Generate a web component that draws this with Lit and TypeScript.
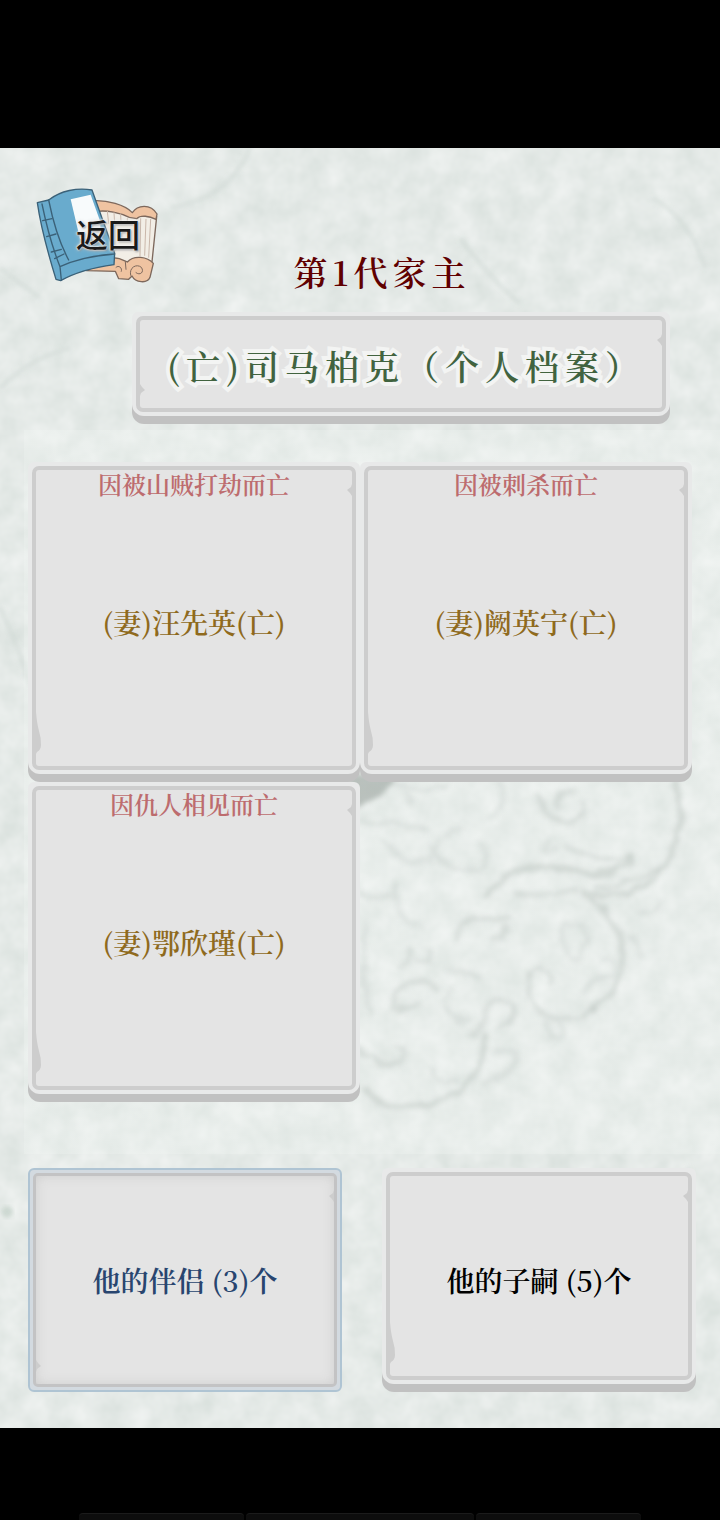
import { LitElement, html, css, svg } from "lit";
import { customElement, property } from "lit/decorators.js";

@customElement("stone-button")
class StoneButton extends LitElement {
  @property({ type: Boolean, reflect: true }) pressed = false;
  @property() note = "";
  @property() label = "";
  @property() tone = "ink";

  static styles = css`
    :host {
      display: block;
    }
    .stone {
      display: flex;
      width: 100%;
      height: 100%;
      margin: 0;
      padding: 0 0 8px;
      border: 0;
      border-radius: 4px 4px 12px 12px;
      background: linear-gradient(transparent 50%, #c1c1c1 50%);
      font: inherit;
      color: inherit;
      cursor: pointer;
    }
    .rim {
      flex: 1;
      display: flex;
      padding: 4px;
      border-radius: 6px 6px 12px 12px;
      background: #e8e9e9;
    }
    .face {
      position: relative;
      flex: 1;
      display: grid;
      place-items: center;
      border: 4px solid #cdcdcd;
      border-radius: 7px;
      background: #e4e4e4;
    }
    .label {
      grid-area: 1 / 1;
      padding-top: 8px;
      font-size: 28px;
      line-height: 36px;
      white-space: pre;
    }
    .note {
      grid-area: 1 / 1;
      align-self: start;
      font-size: 24px;
      line-height: 28px;
      color: #bd6c6e;
    }
    .chip {
      position: absolute;
      fill: #cdcdcd;
    }
    .chip-right {
      top: 14px;
      right: 0;
      width: 5px;
      height: 12px;
    }
    .chip-left {
      bottom: 12px;
      left: 0;
      width: 6px;
      height: 42px;
    }
    .ink {
      color: #000;
    }
    .gold {
      color: #8f6a1d;
    }
    .green {
      padding: 4px 0 0 10px;
      font-size: 34px;
      letter-spacing: 6px;
      color: #41633f;
      -webkit-text-stroke: 8px #f3f4f3;
      stroke-linejoin: round;
      paint-order: stroke fill;
    }
    .navy {
      color: #28456f;
    }
    :host([pressed]) .stone {
      padding: 0;
      border-radius: 6px;
      background: none;
    }
    :host([pressed]) .rim {
      padding: 3px;
      border: 2px solid #afc4d3;
      border-radius: 6px;
      background: #d3dae0;
    }
    :host([pressed]) .face {
      border-width: 3px;
      border-color: #c3c3c4;
      border-radius: 5px;
      box-shadow: inset 0 0 12px #cfcfcf;
    }
    :host([pressed]) .label {
      padding-top: 0;
    }
    :host([pressed]) .chip-left,
    :host([flat]) .chip-left {
      width: 5px;
      height: 12px;
    }
  `;

  render() {
    const small = this.pressed || this.hasAttribute("flat");
    return html`<button class="stone" aria-pressed=${this.pressed ? "true" : "false"}>
      <span class="rim"><span class="face">
        <svg class="chip chip-right" viewBox="0 0 5 12" aria-hidden="true"><path d="M5 0 L4 3 L0 6 L3 9 L5 12Z" /></svg>
        ${small
          ? html`<svg class="chip chip-left" viewBox="0 0 5 12" aria-hidden="true"><path d="M0 0 L2 3 L5 6 L1 9 L0 12Z" /></svg>`
          : html`<svg class="chip chip-left" viewBox="0 0 6 42" aria-hidden="true"><path d="M0 0 Q1 12 3 19 Q5 25 5 33 Q5 38 1 40 L0 42Z" /></svg>`}
        ${this.note ? html`<span class="note">${this.note}</span>` : ""}
        <span class="label ${this.tone}">${this.label}</span>
      </span></span>
    </button>`;
  }
}

const bookIcon = svg`
  <g stroke-linejoin="round" stroke-linecap="round" stroke="#7d685c" stroke-width="4">
    <path fill="#f2eee6" d="M225 112 L338 138 L410 140 L395 285 L320 275 L240 275Z" />
    <path fill="#efc3a1" d="M222 92 C260 90 315 104 337 128 C352 104 392 100 411 132 L408 148 C388 138 362 134 350 146 L328 142 C300 128 260 120 232 124Z" />
    <path fill="#efc3a1" d="M200 302 L286 264 C300 264 308 270 322 276 C342 254 382 260 400 280 L390 322 C382 342 346 338 336 318 L326 328 L296 326 L286 304Z" />
    <path fill="none" stroke-width="3" d="M332 316 C326 292 350 280 364 292 C374 306 360 318 348 308 M288 292 C296 284 308 294 304 304 M316 276 L318 298" />
    <path fill="none" stroke="#c9b7aa" stroke-width="3" d="M262 124 L266 160 M282 128 L284 160 M302 132 L303 160 M362 146 L360 258 M378 148 L374 256 M392 148 L386 262 M322 146 L322 160" />
  </g>
  <g stroke-linejoin="round" stroke-linecap="round" stroke="#3b6178" stroke-width="4">
    <path fill="#69abcd" d="M52 98 L86 90 C122 62 172 52 216 60 L248 150 L284 250 L282 284 C224 292 168 306 122 332 L108 328 C84 250 62 170 52 98Z" />
    <path fill="none" d="M86 90 C98 150 118 218 146 270 M120 290 C166 268 226 256 284 252 M120 290 L124 330 M66 102 C80 170 100 240 120 290" />
    <path fill="none" d="M68 152 L96 146 M80 200 L108 192 M94 246 L124 238 M104 266 L132 252" />
  </g>
  <path fill="#f8fbfc" d="M152 88 L212 74 L240 152 L244 210 L180 206Z" />
`;

const cloudPattern = svg`
  <g fill="none" stroke="#a9b3ae" stroke-linecap="round" filter="url(#soften)">
    <path fill="#8f9893" stroke="none" opacity=".75" d="M0 40 L150 40 Q110 110 45 130 L0 170Z" />
    <g stroke-width="17" opacity=".5">
      <path d="M980 66 Q1012 180 970 270 Q930 370 860 390 Q770 415 700 402" />
      <path d="M410 412 Q470 322 560 322 Q640 318 720 342 Q800 352 850 290" />
      <path d="M400 830 Q420 900 330 990 Q230 1052 100 1035 Q60 1010 40 980" />
      <path d="M700 400 Q800 470 815 560 Q830 690 730 745" />
    </g>
    <g stroke-width="14" opacity=".42">
      <path d="M500 400 Q580 412 680 390 M650 260 Q740 310 840 294 M740 385 Q850 370 930 330" />
      <path d="M730 745 Q690 780 620 775 Q530 740 530 680 Q535 630 575 630 Q620 640 600 676" />
      <path d="M325 540 Q320 480 380 470 L470 472 M430 540 Q480 540 460 500" />
      <path d="M370 830 Q410 790 405 750 Q440 700 490 730 Q505 780 450 800" />
      <path d="M30 860 Q80 925 150 908 Q190 885 140 866" />
      <path d="M125 750 Q120 680 180 665 Q240 660 262 692 M140 748 Q180 752 205 730" />
      <path d="M560 110 Q600 190 655 192 Q720 172 700 130 M625 146 Q615 90 670 96" />
      <path d="M160 630 Q190 600 180 560 M200 600 Q240 620 240 570" />
    </g>
    <g stroke-width="14" opacity=".3">
      <path d="M30 190 Q130 180 230 208 M100 240 Q150 320 240 300 Q280 200 330 210 M240 260 Q300 350 400 330 Q420 290 390 250" />
      <path d="M40 66 Q180 100 290 74 M450 66 Q480 130 420 170 M175 100 L178 130" />
      <path d="M640 490 Q620 570 680 600 Q720 560 700 500 L650 492 M600 240 Q560 290 620 270" />
      <path d="M870 455 Q920 490 925 430 M835 535 Q880 540 865 580 M590 790 Q600 850 640 830 Q640 790 600 780" />
      <path d="M140 360 Q110 460 220 500 M30 410 L120 405 M50 500 Q20 640 70 760 M290 630 L390 650 M300 680 Q270 800 360 780" />
      <path d="M250 920 Q240 980 320 960 M440 880 Q500 850 500 900 Q470 960 400 970 M760 600 Q800 590 790 640 Q720 660 700 700" />
    </g>
  </g>
`;

@customElement("app-root")
class AppRoot extends LitElement {
  static styles = css`
    :host {
      display: block;
      font-family: "Noto Serif CJK SC", "Noto Serif SC", "Liberation Serif", "Noto Sans CJK SC", serif;
      font-weight: 600;
    }
    .page {
      display: flex;
      flex-direction: column;
      box-sizing: border-box;
      min-height: 100vh;
      padding-top: 148px;
      background: #000;
    }
    .stage {
      position: relative;
      flex: 1;
      background: #e4e9e6;
      overflow: hidden;
      isolation: isolate;
      padding-bottom: 36px;
    }
    .paper {
      position: absolute;
      inset: 0;
      width: 100%;
      height: 100%;
      z-index: -1;
    }
    .header {
      display: grid;
      grid-template-columns: 132px 1fr;
      row-gap: 20px;
      padding: 38px 50px 0 0;
    }
    .back {
      position: relative;
      margin: 0 0 8px 35px;
      padding: 0;
      width: 125px;
      height: 98px;
      border: 0;
      background: none;
      cursor: pointer;
    }
    .back svg {
      display: block;
      width: 125px;
      height: 98px;
    }
    .back span {
      position: absolute;
      top: 27px;
      left: 41px;
      font-family: "Noto Sans CJK SC", sans-serif;
      font-weight: 500;
      font-size: 32px;
      line-height: 40px;
      white-space: nowrap;
      color: #1a1a1a;
      text-shadow: 0 0 2px #fff, 0 0 2px #fff, 1px 1px 2px #777, 0 0 4px #ddd;
    }
    .title {
      align-self: end;
      margin: 0;
      padding-right: 38px;
      text-align: center;
      font-size: 34px;
      font-weight: 600;
      line-height: 40px;
      letter-spacing: 5px;
      color: #600000;
    }
    .profile {
      grid-column: 2;
      height: 112px;
    }
    .spouses {
      display: grid;
      grid-template-columns: 1fr 1fr;
      grid-auto-rows: 320px;
      margin-top: 6px;
      padding: 32px 28px 52px;
      background: linear-gradient(90deg, transparent 24px, #f3f8f540 24px);
    }
    .clouds {
      width: 100%;
      height: 100%;
      overflow: visible;
      position: relative;
      z-index: -1;
    }
    .tabs {
      display: grid;
      grid-template-columns: 1fr 1fr;
      gap: 40px;
      height: 224px;
      padding: 14px 24px 0 28px;
    }
    .dock {
      display: grid;
      grid-template-columns: 165fr 229fr 165fr;
      gap: 2px;
      align-items: end;
      height: 92px;
      padding: 0 79px;
    }
    .key {
      height: 6px;
      border-top: 1px solid #1b1b1b;
      border-radius: 4px 4px 0 0;
      background: #0d0d0d;
    }
  `;

  spouses = [
    { note: "因被山贼打劫而亡", label: "(妻)汪先英(亡)" },
    { note: "因被刺杀而亡", label: "(妻)阙英宁(亡)" },
    { note: "因仇人相见而亡", label: "(妻)鄂欣瑾(亡)" },
  ];

  render() {
    return html`<div class="page">
      <main class="stage">
        <svg class="paper" aria-hidden="true">
          <filter id="grain" x="0" y="0" width="100%" height="100%" color-interpolation-filters="sRGB">
            <feTurbulence type="fractalNoise" baseFrequency="0.04" numOctaves="3" seed="8" />
            <feColorMatrix values="0.10 0 0 0 0.847  0.08 0 0 0 0.877  0.09 0 0 0 0.862  0 0 0 0 1" />
          </filter>
          <filter id="fibre" x="-10%" y="-10%" width="120%" height="120%">
            <feGaussianBlur stdDeviation="2" />
          </filter>
          <rect width="100%" height="100%" filter="url(#grain)" />
          <g fill="none" stroke="#cbd5d0" stroke-width="4" opacity=".5" filter="url(#fibre)">
            <path d="M460 90 Q490 130 520 156 M652 50 Q690 70 705 120 M250 0 Q230 50 170 60 M0 240 Q30 210 70 200 M0 120 L40 150 M0 460 Q20 500 30 540 M690 1020 Q640 1100 620 1180" />
          </g>
          <circle cx="7" cy="1064" r="6" fill="#c2d0c8" opacity=".7" filter="url(#fibre)" />
        </svg>
        <header class="header">
          <button class="back">
            <svg viewBox="45 48 375 294" aria-hidden="true">${bookIcon}</svg>
            <span>返回</span>
          </button>
          <h1 class="title">第1代家主</h1>
          <stone-button class="profile" flat tone="green" label="(亡)司马柏克（个人档案）"></stone-button>
        </header>
        <section class="spouses">
          ${this.spouses.map(
            (s) => html`<stone-button tone="gold" note=${s.note} label=${s.label}></stone-button>`
          )}
          <svg class="clouds" viewBox="30 66 996 960" preserveAspectRatio="none" aria-hidden="true">
            <filter id="soften" x="-10%" y="-10%" width="120%" height="120%" color-interpolation-filters="sRGB">
              <feTurbulence type="fractalNoise" baseFrequency="0.02" numOctaves="2" seed="3" result="n" />
              <feDisplacementMap in="SourceGraphic" in2="n" scale="34" xChannelSelector="R" yChannelSelector="G" />
              <feGaussianBlur stdDeviation="8" />
            </filter>
            ${cloudPattern}
          </svg>
        </section>
        <nav class="tabs">
          <stone-button pressed tone="navy" label="他的伴侣 (3)个"></stone-button>
          <stone-button tone="ink" label="他的子嗣 (5)个"></stone-button>
        </nav>
      </main>
      <footer class="dock"><span class="key"></span><span class="key"></span><span class="key"></span></footer>
    </div>`;
  }
}
